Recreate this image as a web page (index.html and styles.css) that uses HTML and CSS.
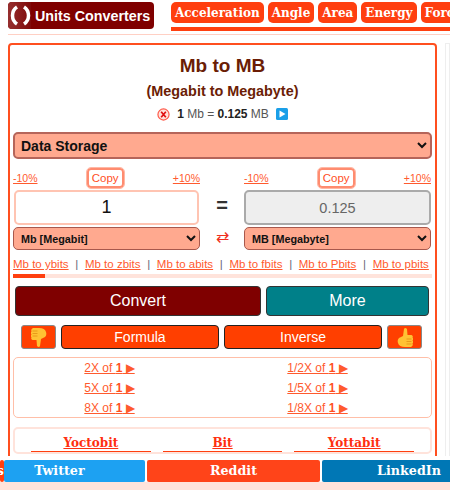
FILE: index.html
```html
<!DOCTYPE html>
<html lang="en">
<head>
    <meta charset="UTF-8">
    <meta name="viewport" content="width=device-width, initial-scale=1.0">
    <title>Mb to MB</title>
    <link rel="stylesheet" href="styles.css">
</head>
<body>

<header class="top">
    <a class="logo" href="#">
        <span class="logo-mark">
            <svg width="23" height="27" viewBox="0 0 23 27">
                <path d="M9 5 C3 9 3 18 9 22" fill="none" stroke="#fff" stroke-width="3.500"/>
                <path d="M16 5 C22 9 22 18 16 22" fill="none" stroke="#fff" stroke-width="3.500"/>
            </svg>
        </span>
        <span class="logo-text">Units Converters</span>
    </a>
    <nav class="tabs">
        <a href="#">Acceleration</a>
        <a href="#">Angle</a>
        <a href="#">Area</a>
        <a href="#">Energy</a>
        <a href="#">Force</a>
    </nav>
</header>
<div class="top-rule"></div>

<div class="page">
    <main class="card">
        <h1>Mb to MB</h1>
        <h2>(Megabit to Megabyte)</h2>
        <div class="result-line">
            <svg class="icon-x" width="13" height="13" viewBox="0 0 14 14">
                <circle cx="7" cy="7" r="6" fill="#ffe3dc" stroke="#ff5a4a" stroke-width="1.300"/>
                <path d="M4.500 4 L9.500 10 M9.500 4 L4.500 10" stroke="#e01010" stroke-width="1.800"/>
            </svg>
            <span><b>1</b> Mb = <b>0.125</b> MB</span>
            <svg class="icon-play" width="12" height="12" viewBox="0 0 12 12">
                <rect width="12" height="12" rx="1.500" fill="#1a9fe8"/>
                <path d="M3.500 2.500 L9.500 6 L3.500 9.500 Z" fill="#fff"/>
            </svg>
        </div>

        <select class="category">
            <option>Data Storage</option>
        </select>

        <div class="converter">
            <div class="side">
                <div class="percent">
                    <a href="#">-10%</a>
                    <button class="copy">Copy</button>
                    <a href="#">+10%</a>
                </div>
                <input class="value" type="text" value="1">
                <select class="unit"><option>Mb [Megabit]</option></select>
            </div>
            <div class="middle">
                <span class="equals">=</span>
                <span class="swap">⇄</span>
            </div>
            <div class="side">
                <div class="percent">
                    <a href="#">-10%</a>
                    <button class="copy">Copy</button>
                    <a href="#">+10%</a>
                </div>
                <input class="value output" type="text" value="0.125" disabled>
                <select class="unit"><option>MB [Megabyte]</option></select>
            </div>
        </div>

        <div class="related">
            <a href="#">Mb to ybits</a><i>|</i>
            <a href="#">Mb to zbits</a><i>|</i>
            <a href="#">Mb to abits</a><i>|</i>
            <a href="#">Mb to fbits</a><i>|</i>
            <a href="#">Mb to Pbits</a><i>|</i>
            <a href="#">Mb to pbits</a>
        </div>
        <div class="scroll-track"><div class="scroll-thumb"></div></div>

        <div class="main-actions">
            <button class="btn-convert">Convert</button>
            <button class="btn-more">More</button>
        </div>

        <div class="sub-actions">
            <button class="thumb">
                <svg width="16" height="21" viewBox="0 0 16 21">
                    <path d="M1 1 h7 q6 0 7 4 q1 3 -1 5 l-4 2 l-1 7 q-1 2 -3 0 l-.5 -6 h-4 q-2 -1 -1 -2.500 q-1.500 -1.500 0 -3 q-1.500 -1.500 0 -3 q-1 -2.500 1.500 -3.500 z" fill="#ffc233"/>
                    <path d="M1.500 4 h5 M1.500 6.500 h5 M1.500 9 h5" stroke="#e89a1a" stroke-width="1"/>
                </svg>
            </button>
            <button class="btn-red">Formula</button>
            <button class="btn-red">Inverse</button>
            <button class="thumb">
                <svg width="16" height="21" viewBox="0 0 16 21">
                    <path d="M15 20 h-7 q-6 0 -7 -4 q-1 -3 1 -5 l4 -2 l1 -7 q1 -2 3 0 l.5 6 h4 q2 1 1 2.500 q1.500 1.500 0 3 q1.500 1.500 0 3 q1 2.500 -1.500 3.500 z" fill="#ffc233"/>
                    <path d="M14.500 17 h-5 M14.500 14.500 h-5 M14.500 12 h-5" stroke="#e89a1a" stroke-width="1"/>
                </svg>
            </button>
        </div>

        <div class="multiples">
            <a href="#">2X of <b>1</b> ▶</a>
            <a href="#">1/2X of <b>1</b> ▶</a>
            <a href="#">5X of <b>1</b> ▶</a>
            <a href="#">1/5X of <b>1</b> ▶</a>
            <a href="#">8X of <b>1</b> ▶</a>
            <a href="#">1/8X of <b>1</b> ▶</a>
        </div>

        <div class="units-box">
            <a href="#"><span>Yoctobit</span></a>
            <a href="#"><span>Bit</span></a>
            <a href="#"><span>Yottabit</span></a>
        </div>
    </main>
    <aside class="side-panel"></aside>
</div>

<div class="share">
    <a class="share-first" href="#">s</a>
    <a class="share-twitter" href="#">Twitter</a>
    <a class="share-reddit" href="#">Reddit</a>
    <a class="share-linkedin" href="#">LinkedIn</a>
</div>

</body>
</html>
```

FILE: styles.css
```css
/* Base */
html, body {
    height: 100%;
    overflow: hidden;
}

body {
    margin: 0;
    background: #fff;
    font-family: "Liberation Sans", Arial, sans-serif;
    color: #222;
}

a {
    color: #ff5a2e;
}

/* Header */
.top {
    display: flex;
    align-items: flex-start;
    gap: 17px;
    padding: 2px 0 0 8px;
    height: 31px;
    box-sizing: border-box;
}

.logo {
    display: flex;
    align-items: center;
    flex: none;
    width: 146px;
    height: 27px;
    background: #7f0000;
    border-radius: 4px;
    overflow: hidden;
    text-decoration: none;
}

.logo-mark {
    display: flex;
    flex: none;
    width: 23px;
    height: 27px;
    background: linear-gradient(90deg, #962f2f, #7f0a0a);
}

.logo-text {
    margin-left: 4px;
    color: #fff;
    font-size: 14.300px;
    font-weight: bold;
    white-space: nowrap;
}

.tabs {
    display: flex;
    gap: 4px;
    flex: 1;
    min-width: 0;
    height: 29px;
    box-sizing: border-box;
    border-bottom: 4px solid #ff3f0f;
    overflow: hidden;
}

.tabs a {
    flex: none;
    height: 21px;
    line-height: 23px;
    padding: 0 4px;
    background: #ff3f0f;
    border-radius: 5px;
    color: #fff;
    font-family: "DejaVu Serif", serif;
    font-size: 12px;
    font-weight: bold;
    text-decoration: none;
}

.top-rule {
    height: 1px;
    margin: 3px 0 0 8px;
    background: #ffd0c4;
}

/* Page */
.page {
    display: flex;
    gap: 8px;
    padding: 8px 0 0 8px;
}

.card {
    flex: none;
    width: 429px;
    box-sizing: border-box;
    padding: 0 3px;
    border: 2px solid #ff4f1f;
    border-radius: 4px;
}

.side-panel {
    flex: 1;
    height: 420px;
    border: 1px solid #eee;
}

h1 {
    margin: 10px 0 0;
    color: #6b1d05;
    font-size: 19px;
    line-height: 22px;
    text-align: center;
}

h2 {
    margin: 4px 0 0;
    color: #6b1d05;
    font-size: 14.400px;
    line-height: 20px;
    text-align: center;
}

.result-line {
    display: flex;
    justify-content: center;
    align-items: center;
    gap: 7px;
    margin-top: 4px;
    height: 18px;
    font-size: 12px;
    color: #555;
}

.result-line b {
    color: #222;
}

/* Selects */
.category {
    display: block;
    width: 100%;
    height: 27px;
    margin-top: 9px;
    padding-left: 2px;
    background: #ffa98f;
    border: 2px solid #b5655a;
    border-radius: 5px;
    color: #111;
    font-family: inherit;
    font-size: 14px;
    font-weight: bold;
}

/* Converter */
.converter {
    display: flex;
    margin-top: 9px;
}

.side {
    flex: none;
    width: 187px;
}

.percent {
    display: flex;
    justify-content: space-between;
    align-items: center;
    height: 20px;
    font-size: 10.500px;
}

.copy {
    width: 37px;
    height: 20px;
    padding: 0;
    background: #fff;
    border: 2px solid #ff8c70;
    border-radius: 4px;
    outline: 1px solid #ffb8a5;
    color: #ff4f1f;
    font-family: inherit;
    font-size: 11.500px;
}

.value {
    display: block;
    width: 185px;
    height: 35px;
    margin: 2px 1px 0;
    box-sizing: border-box;
    background: #fff;
    border: 2px solid #ffc4b2;
    border-radius: 5px;
    color: #111;
    font-family: inherit;
    font-size: 18px;
    text-align: center;
}

.value.output {
    width: 187px;
    margin: 2px 0 0;
    background: #eee;
    border-color: #aaa;
    color: #666;
    font-size: 14.500px;
}

.unit {
    display: block;
    width: 100%;
    height: 23px;
    margin-top: 2px;
    padding-left: 3px;
    background: #ffa98f;
    border: 1px solid #a8584c;
    border-radius: 5px;
    color: #111;
    font-family: inherit;
    font-size: 10.800px;
    font-weight: bold;
}

.middle {
    flex: none;
    width: 44px;
    display: flex;
    flex-direction: column;
    align-items: center;
}

.equals {
    margin-top: 22px;
    font-size: 20px;
    font-weight: bold;
    line-height: 30px;
    color: #333;
}

.swap {
    margin-top: 7px;
    font-size: 16px;
    line-height: 20px;
    color: #f03020;
}

/* Related conversions */
.related {
    display: flex;
    justify-content: space-between;
    align-items: center;
    margin-top: 6px;
    padding-right: 3px;
    height: 16px;
    font-size: 11.500px;
    white-space: nowrap;
}

.related i {
    color: #667;
    font-style: normal;
}

.scroll-track {
    height: 4px;
    margin-top: 2px;
    background: #ffe3db;
}

.scroll-thumb {
    width: 32px;
    height: 4px;
    background: #ff3f0f;
}

/* Buttons */
.main-actions {
    display: flex;
    gap: 5px;
    margin: 8px 0 0 2px;
}

.main-actions button {
    height: 30px;
    padding: 0;
    border: 1px solid #333;
    border-radius: 4px;
    color: #fff;
    font-family: inherit;
    font-size: 16px;
}

.btn-convert {
    width: 246px;
    background: #7f0000;
}

.btn-more {
    width: 163px;
    background: #008089;
}

.sub-actions {
    display: flex;
    gap: 5px;
    margin: 9px 0 0 8px;
}

.sub-actions button {
    height: 24px;
    padding: 0;
    font-family: inherit;
}

.thumb {
    display: flex;
    justify-content: center;
    align-items: center;
    width: 35px;
    background: #ff3f00;
    border: 1px solid #888;
    border-radius: 3px;
}

.btn-red {
    width: 158px;
    background: #ff3f00;
    border: 1px solid #222;
    border-radius: 4px;
    color: #fff;
    font-size: 14px;
}

/* Multiples */
.multiples {
    display: grid;
    grid-template-columns: 191px 225px;
    justify-items: center;
    margin-top: 8px;
    height: 61px;
    box-sizing: border-box;
    border: 1px solid #ffbfa8;
    border-radius: 5px;
    font-size: 12px;
    line-height: 20px;
}

.multiples b {
    color: #ff4f1f;
}

/* Unit links */
.units-box {
    display: flex;
    gap: 12px;
    margin-top: 9px;
    padding: 5px 16px 0;
    border: 2px solid #ffe3db;
    border-radius: 5px;
}

.units-box a {
    flex: 1;
    padding: 2px 0 1px;
    border-bottom: 1px solid #ff3f0f;
    color: #ff2f0f;
    font-family: "DejaVu Serif", serif;
    font-size: 12px;
    font-weight: bold;
    text-align: center;
    text-decoration: none;
}

.units-box span {
    text-decoration: underline;
}

/* Share bar, stuck on the bottom of the window */
.share {
    position: fixed;
    left: 0;
    right: 0;
    bottom: 0;
    display: flex;
    gap: 2px;
    height: 34px;
    padding-top: 4px;
    box-sizing: border-box;
    background: #fff;
    border-bottom: 8px solid #ffe3db;
    overflow: hidden;
}

.share a {
    flex: none;
    line-height: 21px;
    border-radius: 2px;
    color: #fff;
    font-family: "DejaVu Serif", serif;
    font-size: 12.700px;
    font-weight: bold;
    text-align: center;
    text-decoration: none;
}

.share-first {
    width: 4px;
    margin-right: -2px;
    background: #ff3f0f;
    overflow: hidden;
    direction: rtl;
}

.share-twitter {
    width: 141px;
    padding-right: 30px;
    box-sizing: border-box;
    background: #1da1f2;
}

.share-reddit {
    width: 173px;
    background: #ff4419;
}

.share-linkedin {
    width: 174px;
    background: #0077b5;
}
```
